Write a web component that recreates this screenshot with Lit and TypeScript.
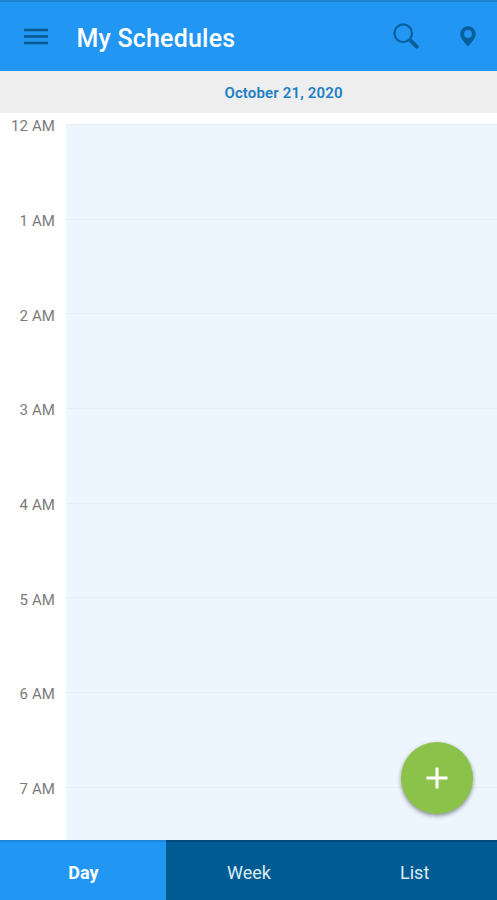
import { LitElement, html, css } from "lit";
import { customElement, property, state } from "lit/decorators.js";
import { classMap } from "lit/directives/class-map.js";

const HOURS = ["12 AM", "1 AM", "2 AM", "3 AM", "4 AM", "5 AM", "6 AM", "7 AM"];
const TABS = ["Day", "Week", "List"];

@customElement("schedule-header")
class ScheduleHeader extends LitElement {
  @property() heading = "";

  static styles = css`
    :host {
      display: flex;
      align-items: center;
      box-sizing: border-box;
      height: 71px;
      padding: 2px 21px 0 24px;
      background: #2196f3;
      border-top: 2px solid #1f82cd;
      color: #fff;
    }
    svg {
      display: block;
      flex: none;
    }
    h1 {
      flex: 1;
      margin: 2px 0 0 28.5px;
      font-size: 25px;
      line-height: 30px;
      font-weight: 500;
      letter-spacing: 0.2px;
      white-space: nowrap;
    }
    .menu {
      margin-bottom: 3px;
    }
    .search {
      margin-right: 41px;
      margin-bottom: 3px;
    }
    .pin {
      margin-bottom: 3px;
    }
  `;

  render() {
    return html`
      <svg class="menu" width="24" height="17" viewBox="0 0 24 17" fill="none" stroke="#085890" stroke-width="2.7">
        <path d="M0 2H24M0 8.5H24M0 15H24" />
      </svg>
      <h1>${this.heading}</h1>
      <svg class="search" width="26" height="26" viewBox="0 0 26 26" fill="none" stroke="#085f9c">
        <circle cx="10.2" cy="10.2" r="8.8" stroke-width="2.2" />
        <path d="M16.4 16.4L18 18" stroke-width="2.4" />
        <path d="M17.6 17.6L23.7 23.7" stroke-width="3.8" stroke-linecap="round" />
      </svg>
      <svg class="pin" width="16" height="21" viewBox="0 0 16 21" fill="#085f9c">
        <path
          fill-rule="evenodd"
          d="M8 .3A7.7 7.7 0 0 0 .3 8C.3 12.2 4.5 16.3 8 20.6C11.5 16.3 15.7 12.2 15.7 8A7.7 7.7 0 0 0 8 .3ZM8 4A3.900 3.900 0 1 1 8 11.800A3.900 3.900 0 1 1 8 4Z"
        />
      </svg>
    `;
  }
}

@customElement("day-grid")
class DayGrid extends LitElement {
  static styles = css`
    :host {
      display: block;
      overflow: hidden;
      background: #fff;
    }
    .row {
      display: grid;
      grid-template-columns: 66px 1fr;
      height: 94.67px;
    }
    .row:first-child {
      margin-top: 11px;
    }
    .label {
      margin-top: -7.6px;
      padding-right: 11px;
      font-size: 15px;
      line-height: 20px;
      letter-spacing: 0.1px;
      text-align: right;
      color: #7b7b7b;
    }
    .slot {
      background: #edf5fe;
      border-top: 1px solid #e7eff6;
    }
  `;

  render() {
    return HOURS.map(
      (hour) => html`<div class="row"><div class="label">${hour}</div><div class="slot"></div></div>`
    );
  }
}

@customElement("view-tabs")
class ViewTabs extends LitElement {
  @state() selected = "Day";

  static styles = css`
    :host {
      display: grid;
      grid-template-columns: repeat(3, 1fr);
      height: 60px;
    }
    button {
      box-sizing: border-box;
      margin: 0;
      padding: 4px 0 0 1px;
      border: 0;
      border-top: 2px solid #014b80;
      background: #005b93;
      color: #dcebf5;
      font: 400 18px/24px Roboto, sans-serif;
    }
    .active {
      background: #2196f3;
      border-top-color: #1f87d8;
      color: #fff;
      font-weight: 700;
    }
  `;

  render() {
    return TABS.map(
      (tab) => html`<button
        class=${classMap({ active: tab === this.selected })}
        @click=${() => (this.selected = tab)}
      >${tab}</button>`
    );
  }
}

@customElement("app-root")
class AppRoot extends LitElement {
  static styles = css`
    :host {
      position: relative;
      display: flex;
      flex-direction: column;
      height: 900px;
      overflow: hidden;
      font-family: Roboto, sans-serif;
    }
    .date {
      box-sizing: border-box;
      height: 42px;
      padding: 2px 0 0 70px;
      background: #eee;
      color: #1c7fc6;
      font-size: 15px;
      line-height: 41px;
      font-weight: 600;
      letter-spacing: 0.15px;
      text-align: center;
    }
    day-grid {
      flex: 1;
      min-height: 0;
    }
    .add {
      position: absolute;
      right: 24px;
      bottom: 86px;
      display: grid;
      place-items: center;
      width: 72px;
      height: 72px;
      padding: 0;
      border: 0;
      border-radius: 50%;
      background: #8bc34a;
      box-shadow: 0 2px 4px rgba(0, 0, 0, 0.42);
    }
    .add svg {
      display: block;
    }
  `;

  render() {
    return html`
      <schedule-header heading="My Schedules"></schedule-header>
      <div class="date">October 21, 2020</div>
      <day-grid></day-grid>
      <view-tabs></view-tabs>
      <button class="add" aria-label="Add">
        <svg width="22" height="22" viewBox="0 0 22 22" stroke="#fff" stroke-width="3">
          <path d="M11 .5V21.5M.5 11H21.5" />
        </svg>
      </button>
    `;
  }
}
